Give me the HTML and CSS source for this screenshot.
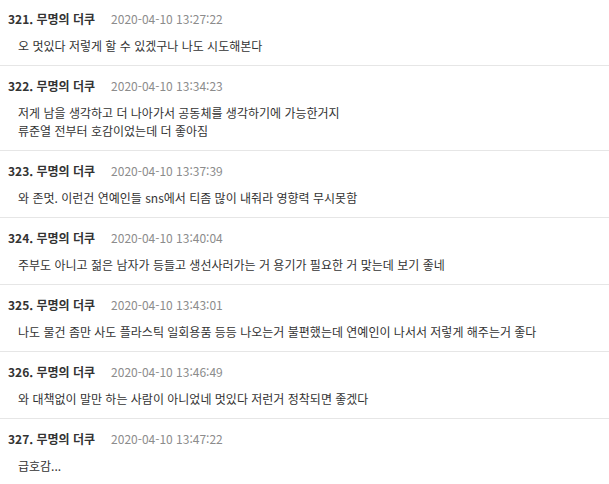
FILE: index.html
```html
<!DOCTYPE html>
<html lang="ko">
<head>
<meta charset="utf-8">
<link rel="stylesheet" href="styles.css">
</head>
<body>
<ul class="comments">
  <li class="comment">
    <div class="meta"><span class="author">321. 무명의 더쿠</span><span class="date">2020-04-10 13:27:22</span></div>
    <div class="body">오 멋있다 저렇게 할 수 있겠구나 나도 시도해본다</div>
  </li>
  <li class="comment">
    <div class="meta"><span class="author">322. 무명의 더쿠</span><span class="date">2020-04-10 13:34:23</span></div>
    <div class="body">저게 남을 생각하고 더 나아가서 공동체를 생각하기에 가능한거지<br>류준열 전부터 호감이었는데 더 좋아짐</div>
  </li>
  <li class="comment">
    <div class="meta"><span class="author">323. 무명의 더쿠</span><span class="date">2020-04-10 13:37:39</span></div>
    <div class="body">와 존멋. 이런건 연예인들 sns에서 티좀 많이 내줘라 영향력 무시못함</div>
  </li>
  <li class="comment">
    <div class="meta"><span class="author">324. 무명의 더쿠</span><span class="date">2020-04-10 13:40:04</span></div>
    <div class="body">주부도 아니고 젊은 남자가 등들고 생선사러가는 거 용기가 필요한 거 맞는데 보기 좋네</div>
  </li>
  <li class="comment">
    <div class="meta"><span class="author">325. 무명의 더쿠</span><span class="date">2020-04-10 13:43:01</span></div>
    <div class="body">나도 물건 좀만 사도 플라스틱 일회용품 등등 나오는거 불편했는데 연예인이 나서서 저렇게 해주는거 좋다</div>
  </li>
  <li class="comment">
    <div class="meta"><span class="author">326. 무명의 더쿠</span><span class="date">2020-04-10 13:46:49</span></div>
    <div class="body">와 대책없이 말만 하는 사람이 아니었네 멋있다 저런거 정착되면 좋겠다</div>
  </li>
  <li class="comment">
    <div class="meta"><span class="author">327. 무명의 더쿠</span><span class="date">2020-04-10 13:47:22</span></div>
    <div class="body">급호감...</div>
  </li>
</ul>
</body>
</html>
```
FILE: styles.css
```css
html, body {
  margin: 0;
  padding: 0;
  background: #fff;
}
body {
  font-family: "Noto Sans CJK KR", "Noto Sans", sans-serif;
  color: #333;
}
.comments {
  list-style: none;
  margin: -1px 0 0 0;
  padding: 0;
}
.comment {
  padding: 11px 0 10px 8px;
  border-bottom: 1px solid #e6e6e6;
}
.meta {
  display: flex;
  align-items: baseline;
  gap: 16px;
  height: 18px;
  line-height: 18px;
}
.author {
  font-size: 12px;
  font-weight: bold;
  color: #333;
}
.date {
  font-size: 12px;
  color: #8c8c8c;
}
.body {
  margin-top: 9px;
  padding-left: 10px;
  font-size: 12px;
  line-height: 18px;
  color: #333;
}
```
